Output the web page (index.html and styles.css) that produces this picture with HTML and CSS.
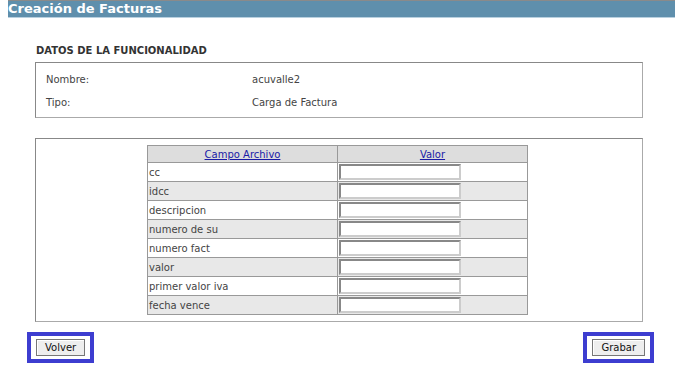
FILE: index.html
```html
<!DOCTYPE html>
<html lang="es">
<head>
    <meta charset="UTF-8">
    <title>Creación de Facturas</title>
    <link rel="stylesheet" href="styles.css">
</head>
<body>
    <div class="titlebar">Creación de Facturas</div>
    <div class="page">
        <h3>DATOS DE LA FUNCIONALIDAD</h3>
        <div class="box info">
            <div class="info-row"><span class="lbl">Nombre:</span><span>acuvalle2</span></div>
            <div class="info-row"><span class="lbl">Tipo:</span><span>Carga de Factura</span></div>
        </div>
        <div class="box fields">
            <table>
                <thead>
                    <tr>
                        <th><a href="#">Campo Archivo</a></th>
                        <th><a href="#">Valor</a></th>
                    </tr>
                </thead>
                <tbody>
                    <tr><td>cc</td><td><input type="text"></td></tr>
                    <tr class="alt"><td>idcc</td><td><input type="text"></td></tr>
                    <tr><td>descripcion</td><td><input type="text"></td></tr>
                    <tr class="alt"><td>numero de su</td><td><input type="text"></td></tr>
                    <tr><td>numero fact</td><td><input type="text"></td></tr>
                    <tr class="alt"><td>valor</td><td><input type="text"></td></tr>
                    <tr><td>primer valor iva</td><td><input type="text"></td></tr>
                    <tr class="alt"><td>fecha vence</td><td><input type="text"></td></tr>
                </tbody>
            </table>
        </div>
    </div>
    <div class="actions">
        <div class="hl"><button>Volver</button></div>
        <div class="hl"><button>Grabar</button></div>
    </div>
</body>
</html>
```

FILE: styles.css
```css
body { margin: 0; font-family: "DejaVu Sans", Verdana, sans-serif; font-size: 10px; color: #444; background: #fff; }
.titlebar {
    margin-left: 8px;
    height: 16px;
    border-top: 1px solid #8a8a8a;
    border-bottom: 1px solid #b9d0df;
    background: #5f8fac;
    color: #fff;
    font-weight: bold;
    font-size: 13px;
    line-height: 15px;
}
.page { margin: 0 32px 0 35px; }
h3 { margin: 26px 0 0 1px; font-size: 10px; color: #333; height: 18px; line-height: 14px; }
.box { border: 1px solid #888; border-right-color: #aaa; border-bottom-color: #aaa; }
.info { padding: 5px 0 0 10px; box-sizing: border-box; height: 56px; }
.info-row { display: flex; height: 23px; align-items: center; }
.lbl { width: 206px; }
.fields { margin-top: 20px; padding: 6px 0; display: flex; justify-content: center; }
table { width: 381px; border-collapse: collapse; border: 1px solid #888; margin-left: -3px; }
th, td { border: 1px solid #999; height: 18px; padding: 0 1px; text-align: left; }
th { height: 16px; background: #ddd; font-weight: normal; text-align: center; width: 50%; }
th a { color: #1a1aa6; }
.alt td { background: #e8e8e8; }
input[type="text"] {
    width: 122px;
    height: 16px;
    box-sizing: border-box;
    margin: 0;
    display: block;
    border: 2px solid #888;
    border-right-color: #ccc;
    border-bottom-color: #ccc;
    background: #fff;
}
.actions { display: flex; justify-content: space-between; margin: 10px 21px 0 27px; }
.hl { border: 4px solid #3d3dd0; padding: 3px 5px 3px 5px; background: #fff; }
button {
    display: block;
    font-family: "DejaVu Sans", Verdana, sans-serif;
    font-size: 10px;
    color: #111;
    background: #eee;
    border: 1px solid #777;
    box-shadow: inset 1px 1px 0 #fff;
    height: 17px;
    padding: 0 8px;
}
```
